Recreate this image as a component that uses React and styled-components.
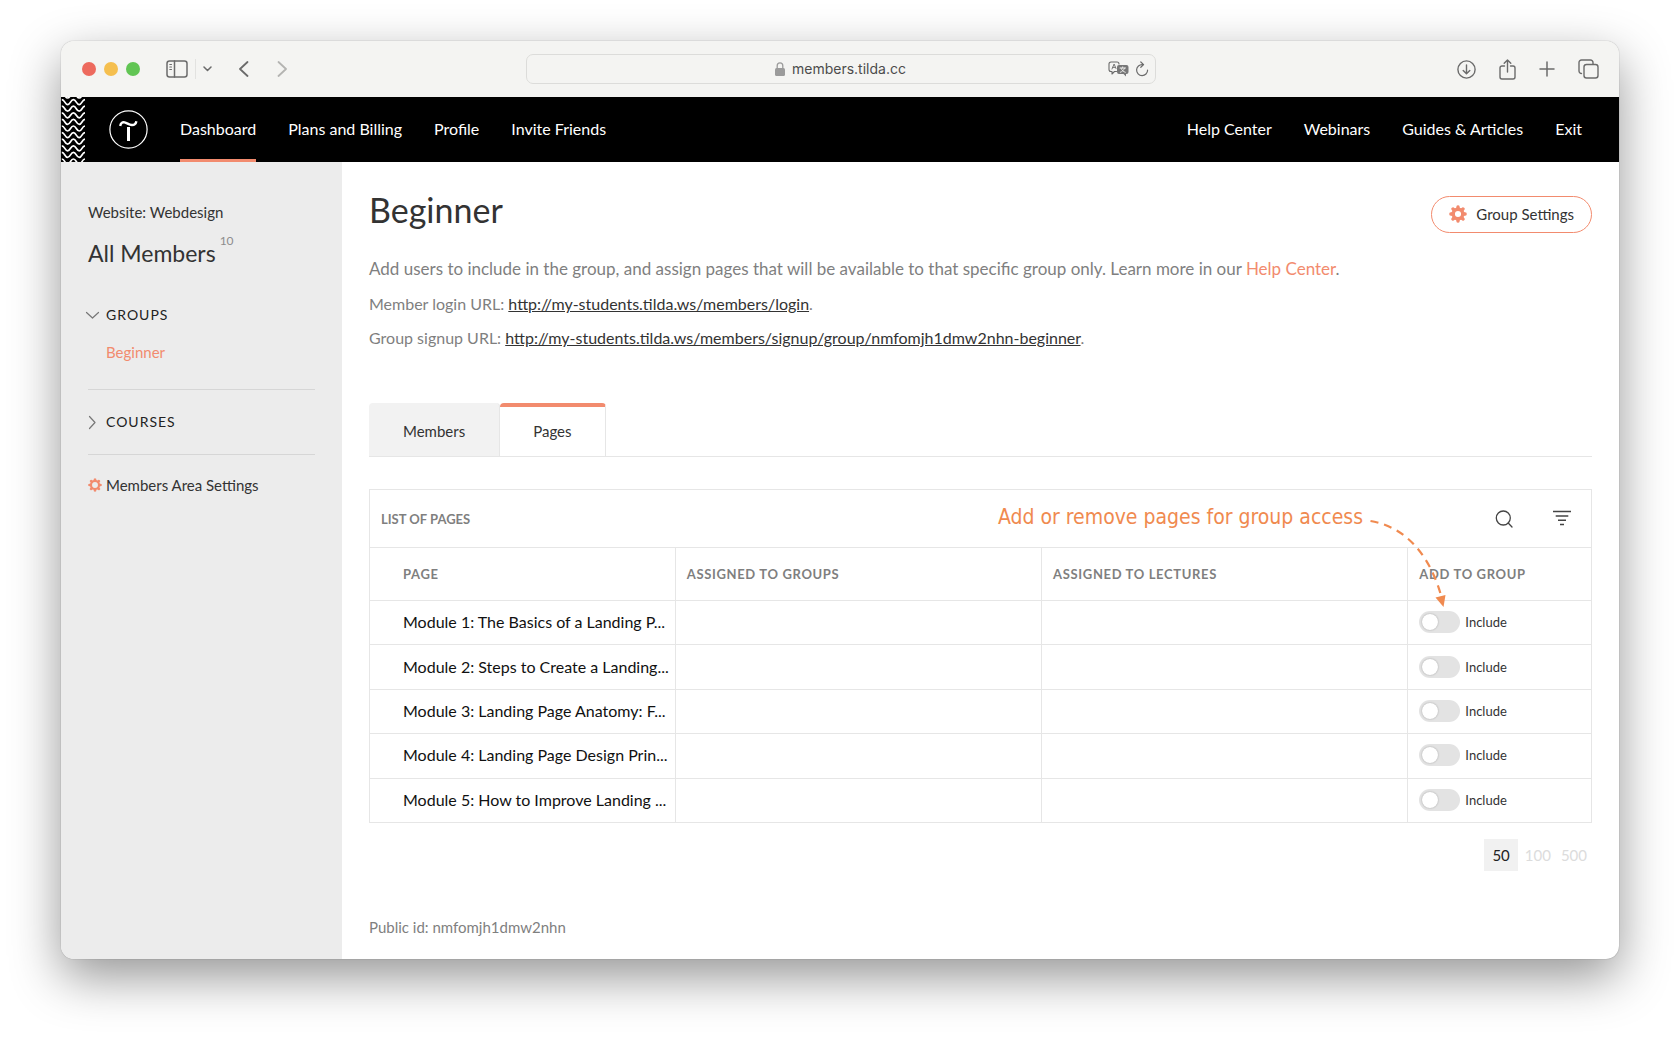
import React, { useState } from 'react'
import styled, { createGlobalStyle } from 'styled-components'

const GlobalStyle = createGlobalStyle`
  :root {
    --accent: #f28b6e;
    --note: #f08a4f;
    --line: #e6e6e6;
    --text: #333;
    --muted: #7f7f7f;
  }

  * {
    box-sizing: border-box;
  }

  body {
    margin: 0;
    background-color: #fff;
    color: var(--text);
    font-family: Lato, "Liberation Sans", sans-serif;
    font-size: 16px;
    line-height: 24px;
  }

  a {
    color: inherit;
    text-decoration: none;
  }

  button, input {
    font: inherit;
    color: inherit;
    border: none;
    background: none;
    padding: 0;
    margin: 0;
  }

  svg {
    display: block;
    flex-shrink: 0;
  }
`

const Desktop = styled.div`
  min-height: 100vh;
  padding: 41px 61px 80px;
  display: flex;
  overflow: hidden;
`

const Window = styled.div`
  flex: 1;
  min-width: 0;
  display: flex;
  flex-direction: column;
  border-radius: 13px;
  overflow: hidden;
  background-color: #fff;
  box-shadow: 0 0 1px rgba(0, 0, 0, 0.5), 0 18px 50px rgba(0, 0, 0, 0.42);
`

/* browser toolbar */

const Toolbar = styled.div`
  height: 56px;
  padding: 0 20px 0 21px;
  display: grid;
  grid-template-columns: 1fr 630px 1fr;
  align-items: center;
  background-color: #f4f4f2;
  color: #6b6b6b;
`

const ToolGroup = styled.div`
  display: flex;
  align-items: center;
  justify-content: ${({ $end }) => $end ? 'flex-end' : 'flex-start'};
  gap: ${({ $gap }) => $gap}px;
`

const Light = styled.button`
  width: 14px;
  height: 14px;
  border-radius: 50%;
  background-color: ${({ $color }) => $color};
`

const ToolButton = styled.button`
  display: flex;
  color: ${({ $dim }) => $dim ? '#b4b4b2' : 'inherit'};
`

const Separator = styled.span`
  width: 1px;
  height: 20px;
  background-color: #e2e2e0;
`

const AddressBar = styled.div`
  height: 30px;
  padding: 0 6px;
  display: grid;
  grid-template-columns: 1fr auto 1fr;
  align-items: center;
  border: 1px solid #dcdcda;
  border-radius: 7px;
`

const AddressLabel = styled.label`
  grid-column: 2;
  display: flex;
  align-items: center;
  gap: 7px;
`

const AddressInput = styled.input`
  width: 114px;
  font-family: Inter, "Liberation Sans", sans-serif;
  font-size: 14px;
  color: #4c4c4c;
  outline: none;
`

/* site header */

const Header = styled.header`
  height: 65px;
  padding-right: 37px;
  display: flex;
  align-items: stretch;
  background-color: #000;
  color: #fff;
`

const LogoLink = styled.a`
  display: flex;
  align-items: center;
  margin: 0 32px 0 24px;
`

const Nav = styled.nav`
  display: flex;
  gap: 32px;
  margin-left: ${({ $end }) => $end ? 'auto' : '0'};
`

const NavLink = styled.a`
  display: flex;
  align-items: center;
  border-top: 2px solid transparent;
  border-bottom: 3px solid ${({ $active }) => $active ? 'var(--accent)' : 'transparent'};
  font-size: 16px;
  white-space: nowrap;
`

/* page */

const Body = styled.div`
  flex: 1;
  display: flex;
`

const Sidebar = styled.aside`
  width: 281px;
  flex-shrink: 0;
  padding: 38px 27px 0;
  background-color: #ececec;
`

const Site = styled.div`
  font-size: 15px;
`

const AllMembers = styled.a`
  display: flex;
  align-items: flex-start;
  gap: 4px;
  margin: 13px 0 34px;
  font-size: 23px;
  line-height: 32px;
`

const Count = styled.sup`
  font-size: 12px;
  line-height: 8px;
  color: #8c8c8c;
`

const Section = styled.section`
  padding-bottom: ${({ $open }) => $open ? 25 : 20}px;
  margin-bottom: ${({ $open }) => $open ? 20 : 18}px;
  border-bottom: 1px solid #d6d6d6;
`

const SectionButton = styled.button`
  display: flex;
  align-items: center;
  gap: 6px;
  margin-left: -3px;
  font-size: 14px;
  letter-spacing: 1px;
  color: #222;

  svg {
    color: #777;
  }
`

const SectionLink = styled.a`
  display: block;
  margin: 13px 0 0 18px;
  font-size: 15px;
  color: var(--accent);
`

const SettingsLink = styled.a`
  display: flex;
  align-items: center;
  gap: 4px;
  font-size: 15px;
`

const Main = styled.main`
  flex: 1;
  min-width: 0;
  padding: 25px 27px 20px;
`

const TitleRow = styled.div`
  display: flex;
  align-items: flex-end;
  justify-content: space-between;
`

const Title = styled.h1`
  margin: 0;
  font-size: 34px;
  line-height: 46px;
  font-weight: 400;
`

const GroupButton = styled.button`
  height: 37px;
  padding: 0 17px 2px;
  display: flex;
  align-items: center;
  gap: 9px;
  border: 1px solid var(--accent);
  border-radius: 19px;
  font-size: 15px;
`

const Description = styled.p`
  margin: 22px 0 4px;
  font-size: 17px;
  line-height: 28px;
  color: var(--muted);
`

const HelpLink = styled.a`
  color: var(--accent);
`

const UrlLine = styled.p`
  margin: 0;
  font-size: 16px;
  line-height: 34px;
  color: var(--muted);
`

const UrlLink = styled.a`
  color: var(--text);
  text-decoration: underline;
`

const Tabs = styled.div`
  display: flex;
  margin-top: 48px;
  border-bottom: 1px solid var(--line);
`

const Tab = styled.button`
  height: 53px;
  padding: ${({ $active }) => $active ? '0 33px 2px' : '2px 34px 0'};
  border-top: ${({ $active }) => $active ? '4px solid var(--accent)' : 'none'};
  border-right: 1px solid var(--line);
  border-radius: 4px 4px 0 0;
  background-color: ${({ $active }) => $active ? '#fff' : '#f2f2f2'};
  font-size: 15px;
`

const Panel = styled.section`
  position: relative;
  margin-top: 32px;
  border: 1px solid var(--line);
  border-width: 1px 1px 0;
`

const PanelHead = styled.div`
  height: 57px;
  padding: 0 20px 0 11px;
  display: flex;
  align-items: center;
  gap: 40px;
  color: #444;
`

const PanelTitle = styled.h2`
  margin: 0;
  flex: 1;
  font-size: 13px;
  font-weight: 700;
  color: var(--muted);
`

const Table = styled.table`
  width: 100%;
  height: 276px;
  border-collapse: collapse;
  table-layout: fixed;
`

const Cell = styled.td`
  padding: 0 11px 1px;
  border: 1px solid var(--line);
  overflow: hidden;
  white-space: nowrap;

  &:first-child {
    padding-left: 33px;
    border-left: none;
  }

  &:last-child {
    border-right: none;
  }
`

const HeadCell = styled(Cell)`
  width: ${({ $width }) => $width};
  height: 53px;
  text-align: left;
  font-size: 13px;
  font-weight: 700;
  letter-spacing: 0.05em;
  color: var(--muted);
`

const PageName = styled.a`
  font-size: 16px;
  color: #111;
`

const SwitchLabel = styled.label`
  display: flex;
  align-items: center;
  gap: 5px;
  font-size: 13px;
`

const Switch = styled.input`
  appearance: none;
  width: 41px;
  height: 22px;
  padding: 3px;
  display: flex;
  justify-content: ${({ checked }) => checked ? 'flex-end' : 'flex-start'};
  border-radius: 11px;
  background-color: ${({ checked }) => checked ? 'var(--accent)' : '#e3e3e3'};

  &::before {
    content: "";
    width: 16px;
    height: 16px;
    border-radius: 50%;
    background-color: #fff;
    box-shadow: 0 0 2px rgba(0, 0, 0, 0.3);
  }
`

const Note = styled.div`
  position: absolute;
  top: 13px;
  right: 142px;
  display: flex;
  align-items: flex-start;
  gap: 6px;
  font-family: "DejaVu Sans Condensed", "Noto Sans", sans-serif;
  font-size: 21px;
  line-height: 28px;
  color: var(--note);
  pointer-events: none;
`

const Pager = styled.div`
  display: flex;
  justify-content: flex-end;
  margin: 16px 0 44px;
`

const PagerButton = styled.button`
  height: 32px;
  padding: 0 ${({ $active }) => $active ? 8 : 5}px;
  margin-right: ${({ $active }) => $active ? 2 : 0}px;
  font-size: 15px;
  color: ${({ $active }) => $active ? '#222' : '#dcdcdc'};
  background-color: ${({ $active }) => $active ? '#f1f1f1' : 'transparent'};
`

const PublicId = styled.div`
  font-size: 15px;
  color: var(--muted);
`

const stroke = {
  fill: 'none',
  stroke: 'currentColor',
  strokeLinecap: 'round',
  strokeLinejoin: 'round',
}

const Gear = ({ size, hole = 3.4 }) => (
  <svg width={size} height={size} viewBox="0 0 20 20" fill="#f28b6e">
    {[0, 45, 90, 135, 180, 225, 270, 315].map(angle => (
      <path key={angle} d="M7.6 5L8.4 1Q8.6 .3 10 .3Q11.4 .3 11.6 1L12.4 5Z" transform={`rotate(${angle} 10 10)`} />
    ))}
    <circle cx="10" cy="10" r={(hole + 7.2) / 2} fill="none" stroke="#f28b6e" strokeWidth={7.2 - hole} />
  </svg>
)

const Waves = () => {
  const rows = Array.from({ length: 11 }, (_, i) => i * 6.6 - 5)
  return (
    <svg width="24" height="65" viewBox="0 0 24 65" fill="none" stroke="#fff" strokeWidth="1.7">
      {rows.map(y => (
        <path key={y} d={`M.8 ${y + 1}C3.8 ${y + 1} 3.8 ${y + 6} 6.6 ${y + 6}S9.6 ${y + 1} 12.4 ${y + 1}S15.4 ${y + 6} 18.2 ${y + 6}S21 ${y + 1} 24 ${y + 1}`} />
      ))}
    </svg>
  )
}

const Logo = () => (
  <svg width="39" height="39" viewBox="0 0 39 39" fill="none" stroke="#fff">
    <circle cx="19.5" cy="19.5" r="18.6" strokeWidth="1.2" />
    <path d="M11.2 16C11.7 13 13.4 11.9 15.6 12.4C18.2 13 20 14.9 22.8 15C25.4 15.100 26.9 13.6 27.4 11.2" strokeWidth="2.4" />
    <path d="M19.5 17V31" strokeWidth="3" />
  </svg>
)

const SidebarIcon = () => (
  <svg width="22" height="18" viewBox="0 0 22 18" {...stroke} strokeWidth="1.5">
    <rect x="1" y="1" width="20" height="16" rx="2.5" />
    <path d="M8.5 1V17" />
    <path d="M3.8 4.5H5.5M3.8 7H5.5M3.8 9.5H5.5" strokeWidth="1.1" />
  </svg>
)

const Chevron = ({ width, height, d, weight = 1.8 }) => (
  <svg width={width} height={height} viewBox={`0 0 ${width} ${height}`} {...stroke} strokeWidth={weight}>
    <path d={d} />
  </svg>
)

const LockIcon = () => (
  <svg width="10" height="14" viewBox="0 0 10 14" fill="#9b9b9b">
    <rect y="6" width="10" height="8" rx="1.5" />
    <path d="M2.2 6.5V3.8A2.8 2.9 0 0 1 7.8 3.8V6.5" fill="none" stroke="#9b9b9b" strokeWidth="1.3" />
  </svg>
)

const TranslateIcon = () => (
  <svg width="21" height="16" viewBox="0 0 21 16" {...stroke}>
    <path d="M8.5 10.5H6.5L4 13V10.5H3A2 2 0 0 1 1 8.5V3A2 2 0 0 1 3 1H9A2 2 0 0 1 11 3" strokeWidth="1.1" />
    <path d="M4 8L6.1 3L8 7.5M4.7 6.4H7.2" strokeWidth=".9" />
    <path d="M11 4H18.5A2 2 0 0 1 20.5 6V11A2 2 0 0 1 18.5 13H18V15.5L15.5 13H11A2 2 0 0 1 9 11V6A2 2 0 0 1 11 4Z" fill="#777" stroke="none" />
    <path d="M12 7H17.5M14.7 5.9V7M16.5 7.2C16 9 14 10.8 12.3 11.3M13 7.2C13.5 9 15.5 10.8 17.3 11.3" stroke="#f4f4f2" strokeWidth=".9" />
  </svg>
)

const ReloadIcon = () => (
  <svg width="14" height="16" viewBox="0 0 14 16" {...stroke} strokeWidth="1.2">
    <path d="M7.5 3.6A5.5 5.5 0 1 0 12.6 9M5.8 1L8.6 3.6L5.8 6.3" />
  </svg>
)

const DownloadIcon = () => (
  <svg width="19" height="19" viewBox="0 0 19 19" {...stroke} strokeWidth="1.4">
    <circle cx="9.5" cy="9.5" r="8.6" />
    <path d="M9.5 5V13.5M6.2 10.4L9.5 13.7L12.8 10.4" />
  </svg>
)

const ShareIcon = () => (
  <svg width="17" height="21" viewBox="0 0 17 21" {...stroke} strokeWidth="1.4">
    <path d="M5.5 7H3A2 2 0 0 0 1 9V18A2 2 0 0 0 3 20H14A2 2 0 0 0 16 18V9A2 2 0 0 0 14 7H11.5" />
    <path d="M8.5 13V1.2M5.2 4.3L8.5 1L11.8 4.3" />
  </svg>
)

const PlusIcon = () => (
  <svg width="16" height="16" viewBox="0 0 16 16" {...stroke} strokeWidth="1.5">
    <path d="M8 1V15M1 8H15" />
  </svg>
)

const WindowsIcon = () => (
  <svg width="21" height="20" viewBox="0 0 21 20" {...stroke} strokeWidth="1.4">
    <rect x="6" y="5.5" width="14" height="13.5" rx="2.5" />
    <path d="M3.5 14.5A2.5 2.5 0 0 1 1 12V3.5A2.5 2.5 0 0 1 3.5 1H12.5A2.5 2.5 0 0 1 15 3.5V5" />
  </svg>
)

const SearchIcon = () => (
  <svg width="18" height="18" viewBox="0 0 18 18" {...stroke} strokeWidth="1.3">
    <circle cx="8.3" cy="8" r="7" />
    <path d="M13.2 13L17 17" />
  </svg>
)

const FilterIcon = () => (
  <svg width="18" height="18" viewBox="0 0 18 18" fill="none" stroke="currentColor" strokeWidth="1.4">
    <path d="M0 1.5H18M2.7 6H15.3M5 10.3H13M7 14.5H11" />
  </svg>
)

// dashed curve from the note down to the first switch
const NoteArrow = () => (
  <svg width="80" height="106" viewBox="0 0 80 106" fill="none">
    <path d="M1.5 18C38 24 62 54 73 96" stroke="#f08a4f" strokeWidth="2.2" strokeDasharray="8 6" />
    <path d="M66.5 94.5L76.5 92L74.5 104Z" fill="#f08a4f" />
  </svg>
)

const modules = [
  'Module 1: The Basics of a Landing P...',
  'Module 2: Steps to Create a Landing...',
  'Module 3: Landing Page Anatomy: F...',
  'Module 4: Landing Page Design Prin...',
  'Module 5: How to Improve Landing ...',
]

const BrowserBar = () => (
  <Toolbar>
    <ToolGroup $gap={26}>
      <ToolGroup $gap={8}>
        <Light $color="#ed6a5e" aria-label="Close" />
        <Light $color="#f5bf4f" aria-label="Minimize" />
        <Light $color="#61c554" aria-label="Zoom" />
      </ToolGroup>
      <ToolGroup $gap={7}>
        <ToolButton aria-label="Sidebar"><SidebarIcon /></ToolButton>
        <Separator />
        <ToolButton aria-label="Tab groups"><Chevron width={9} height={6} d="M1 1L4.5 4.5L8 1" weight={1.5} /></ToolButton>
      </ToolGroup>
      <ToolGroup $gap={28}>
        <ToolButton aria-label="Back"><Chevron width={11} height={16} d="M9.5 1L2 8L9.5 15" /></ToolButton>
        <ToolButton $dim aria-label="Forward"><Chevron width={11} height={16} d="M1.5 1L9 8L1.5 15" /></ToolButton>
      </ToolGroup>
    </ToolGroup>
    <AddressBar>
      <AddressLabel>
        <LockIcon />
        <AddressInput aria-label="Address" defaultValue="members.tilda.cc" />
      </AddressLabel>
      <ToolGroup $end $gap={6}>
        <ToolButton aria-label="Translate"><TranslateIcon /></ToolButton>
        <ToolButton aria-label="Reload"><ReloadIcon /></ToolButton>
      </ToolGroup>
    </AddressBar>
    <ToolGroup $end $gap={23}>
      <ToolButton aria-label="Downloads"><DownloadIcon /></ToolButton>
      <ToolButton aria-label="Share"><ShareIcon /></ToolButton>
      <ToolButton aria-label="New tab"><PlusIcon /></ToolButton>
      <ToolButton aria-label="Tab overview"><WindowsIcon /></ToolButton>
    </ToolGroup>
  </Toolbar>
)

const SiteHeader = () => (
  <Header>
    <Waves />
    <LogoLink href="#" aria-label="Home"><Logo /></LogoLink>
    <Nav>
      <NavLink href="#" $active>Dashboard</NavLink>
      <NavLink href="#">Plans and Billing</NavLink>
      <NavLink href="#">Profile</NavLink>
      <NavLink href="#">Invite Friends</NavLink>
    </Nav>
    <Nav $end>
      <NavLink href="#">Help Center</NavLink>
      <NavLink href="#">Webinars</NavLink>
      <NavLink href="#">Guides &amp; Articles</NavLink>
      <NavLink href="#">Exit</NavLink>
    </Nav>
  </Header>
)

const SideMenu = () => (
  <Sidebar>
    <Site>Website: Webdesign</Site>
    <AllMembers href="#">All Members<Count>10</Count></AllMembers>
    <Section $open>
      <SectionButton>
        <Chevron width={15} height={15} weight={1.2} d="M1.5 4.5L7.5 10L13.5 4.5" />
        GROUPS
      </SectionButton>
      <SectionLink href="#">Beginner</SectionLink>
    </Section>
    <Section>
      <SectionButton>
        <Chevron width={15} height={15} weight={1.2} d="M4.5 1.5L10 7.5L4.5 13.5" />
        COURSES
      </SectionButton>
    </Section>
    <SettingsLink href="#"><Gear size={14} hole={4.2} />Members Area Settings</SettingsLink>
  </Sidebar>
)

const PagesPanel = () => {
  const [included, setIncluded] = useState({})

  const toggle = name => setIncluded({ ...included, [name]: !included[name] })

  return (
    <Panel>
      <PanelHead>
        <PanelTitle>LIST OF PAGES</PanelTitle>
        <ToolButton aria-label="Search"><SearchIcon /></ToolButton>
        <ToolButton aria-label="Filter"><FilterIcon /></ToolButton>
      </PanelHead>
      <Table>
        <thead>
          <tr>
            <HeadCell as="th" $width="25%">PAGE</HeadCell>
            <HeadCell as="th" $width="30%">ASSIGNED TO GROUPS</HeadCell>
            <HeadCell as="th" $width="30%">ASSIGNED TO LECTURES</HeadCell>
            <HeadCell as="th" $width="15%">ADD TO GROUP</HeadCell>
          </tr>
        </thead>
        <tbody>
          {modules.map(name => (
            <tr key={name}>
              <Cell><PageName href="#">{name}</PageName></Cell>
              <Cell />
              <Cell />
              <Cell>
                <SwitchLabel>
                  <Switch type="checkbox" checked={!!included[name]} onChange={() => toggle(name)} />
                  Include
                </SwitchLabel>
              </Cell>
            </tr>
          ))}
        </tbody>
      </Table>
      <Note>Add or remove pages for group access<NoteArrow /></Note>
    </Panel>
  )
}

export default function App() {
  return (
    <Desktop>
      <GlobalStyle />
      <Window>
        <BrowserBar />
        <SiteHeader />
        <Body>
          <SideMenu />
          <Main>
            <TitleRow>
              <Title>Beginner</Title>
              <GroupButton><Gear size={18} />Group Settings</GroupButton>
            </TitleRow>
            <Description>
              Add users to include in the group, and assign pages that will be available to that specific group only. Learn more in our <HelpLink href="#">Help Center</HelpLink>.
            </Description>
            <UrlLine>Member login URL: <UrlLink href="#">http://my-students.tilda.ws/members/login</UrlLink>.</UrlLine>
            <UrlLine>Group signup URL: <UrlLink href="#">http://my-students.tilda.ws/members/signup/group/nmfomjh1dmw2nhn-beginner</UrlLink>.</UrlLine>
            <Tabs>
              <Tab>Members</Tab>
              <Tab $active>Pages</Tab>
            </Tabs>
            <PagesPanel />
            <Pager>
              <PagerButton $active>50</PagerButton>
              <PagerButton>100</PagerButton>
              <PagerButton>500</PagerButton>
            </Pager>
            <PublicId>Public id: nmfomjh1dmw2nhn</PublicId>
          </Main>
        </Body>
      </Window>
    </Desktop>
  )
}
